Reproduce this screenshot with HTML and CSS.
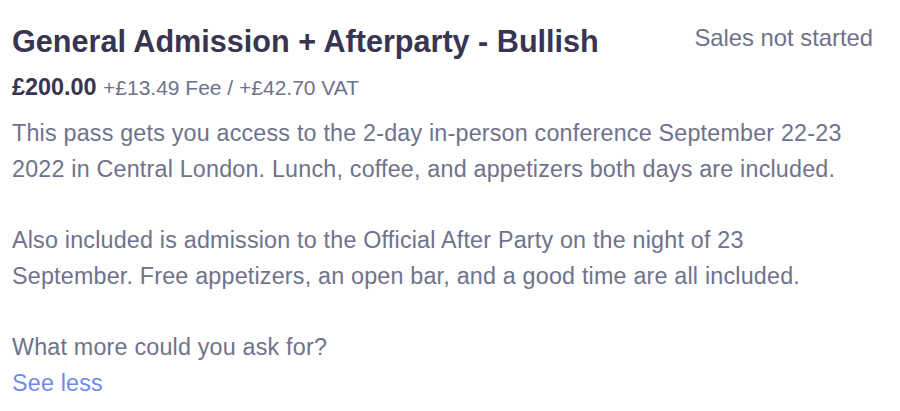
FILE: index.html
```html
<!DOCTYPE html>
<html>
<head>
<meta charset="utf-8">
<link rel="stylesheet" href="styles.css">
</head>
<body>
<div class="ticket">
  <div class="ticket-head">
    <h2 class="ticket-title">General Admission + Afterparty - Bullish</h2>
    <span class="ticket-status">Sales not started</span>
  </div>
  <div class="ticket-price">
    <strong class="price">£200.00</strong>
    <span class="fees">+£13.49 Fee / +£42.70 VAT</span>
  </div>
  <div class="ticket-desc">
    <p>This pass gets you access to the 2-day in-person conference September 22-23 2022 in Central London. Lunch, coffee, and appetizers both days are included.</p>
    <p>Also included is admission to the Official After Party on the night of 23 September. Free appetizers, an open bar, and a good time are all included.</p>
    <p>What more could you ask for?</p>
  </div>
  <a class="see-less" href="#">See less</a>
</div>
</body>
</html>
```

FILE: styles.css
```css
html, body {
  margin: 0;
  padding: 0;
  background: #ffffff;
}
body {
  font-family: "Liberation Sans", Arial, sans-serif;
  color: #70728b;
}
.ticket {
  padding: 23px 27px 0 12px;
}
.ticket-head {
  display: flex;
  justify-content: space-between;
  align-items: flex-start;
}
.ticket-title {
  margin: 0;
  font-size: 30.6px;
  line-height: 36px;
  font-weight: 700;
  color: #37354f;
}
.ticket-status {
  font-size: 23.8px;
  line-height: 30px;
  color: #70728b;
}
.ticket-price {
  margin-top: 13px;
  line-height: 30px;
}
.price {
  font-size: 23.4px;
  font-weight: 700;
  color: #37354f;
}
.fees {
  margin-left: 2px;
  font-size: 21px;
  color: #70728b;
}
.ticket-desc {
  max-width: 845px;
  margin-top: 11px;
  font-size: 23.3px;
  line-height: 35.7px;
  letter-spacing: 0.2px;
  color: #70728b;
}
.ticket-desc p {
  margin: 0 0 35.7px 0;
}
.ticket-desc p:last-child {
  margin-bottom: 0;
}
.see-less {
  display: block;
  font-size: 23.3px;
  line-height: 35.7px;
  letter-spacing: 0.2px;
  color: #7189ee;
  text-decoration: none;
}
```
